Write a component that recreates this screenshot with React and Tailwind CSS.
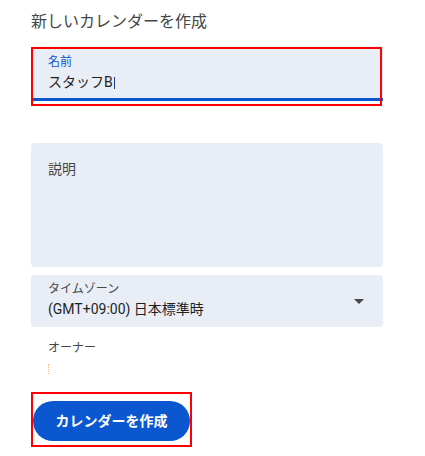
export default function App() {
  const font = { fontFamily: "Roboto, 'Noto Sans CJK JP', sans-serif" };
  return (
    <div className="w-[425px] h-[456px] bg-white overflow-hidden" style={font}>
      <div className="pl-[31px] pt-[10px] flex flex-col">
        <h1 className="text-[16px] leading-6 text-[#444746] font-normal">新しいカレンダーを作成</h1>

        <div className="relative mt-[12px] w-[352px]">
          <div className="h-[55px] rounded-t-[4px] bg-[#e9eef6] border-b-[3px] border-[#0b57d0] pl-[17px] pt-2">
            <div className="text-[12px] leading-4 text-[#0b57d0]">名前</div>
            <div className="text-[14px] leading-6 text-[#1f1f1f] flex items-center">
              <span>スタッフB</span>
              <span className="inline-block w-px h-[12px] ml-[1px] mt-[2px] bg-[#1f3b8f]"></span>
            </div>
          </div>
          <div className="absolute left-0 top-[1px] w-[351px] h-[59px] border-2 border-[#ff0000]"></div>
        </div>

        <div className="mt-[42px] w-[352px] h-[124px] rounded-[4px] bg-[#e9eef6] pl-[17px] pt-[14px]">
          <div className="text-[14px] leading-6 text-[#444746]">説明</div>
        </div>

        <div className="mt-2 w-[352px] h-[52px] rounded-[4px] bg-[#e9eef6] pl-[17px] pr-[19px] flex items-center justify-between">
          <div className="flex flex-col">
            <div className="text-[12px] leading-4 text-[#444746]">タイムゾーン</div>
            <div className="text-[14px] leading-6 text-[#1f1f1f]">(GMT+09:00) 日本標準時</div>
          </div>
          <svg width="10" height="5" viewBox="0 0 10 5" className="mt-[1px]">
            <path d="M0 0 L10 0 L5 5 Z" fill="#444746" />
          </svg>
        </div>

        <div className="mt-[13px] pl-[17px] text-[12px] leading-4 text-[#444746]">オーナー</div>
        <div className="ml-[17px] mt-2 w-px h-[10px] border-l border-dotted border-[#f2b980]"></div>

        <div className="mt-[18px] w-[161px] h-[55px] border-2 border-[#ff0000] pt-[7px]">
          <button className="w-[157px] h-[40px] rounded-full bg-[#0b57d0] text-white text-[14px] font-bold leading-5 flex items-center justify-center">
            カレンダーを作成
          </button>
        </div>
      </div>
    </div>
  );
}
